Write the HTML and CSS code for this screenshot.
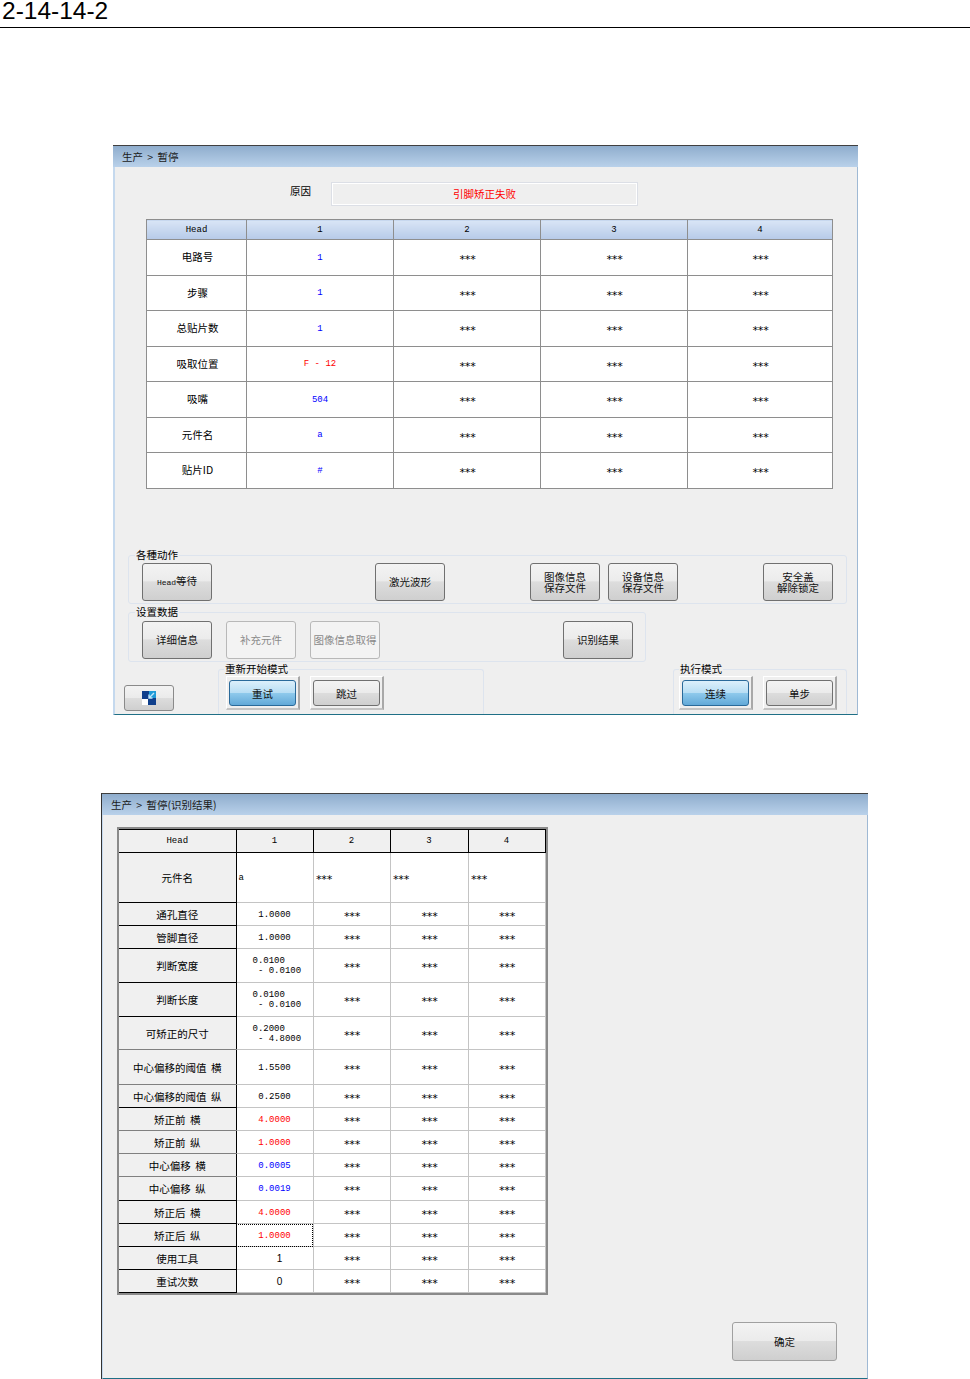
FILE: index.html
```html
<!DOCTYPE html>
<html lang="zh-CN">
<head>
<meta charset="utf-8">
<title>2-14-14-2</title>
<link rel="stylesheet" href="styles.css">
</head>
<body>
<header class="page-head">2-14-14-2</header>
<main class="page">
  <section class="window win-a">
    <div class="titlebar">生产 &gt; 暂停</div>
    <div class="win-body body-a">
      <div class="reason">
        <span class="reason-label">原因</span>
        <div class="reason-box">引脚矫正失败</div>
      </div>
      <table class="grid grid-a">
        <colgroup><col class="a0"><col class="a1"><col class="a1"><col class="a1"><col class="a4"></colgroup>
        <tr class="ah"><th>Head</th><th>1</th><th>2</th><th>3</th><th>4</th></tr>
        <tr class="r36"><td class="cn">电路号</td><td class="blue">1</td><td>***</td><td>***</td><td>***</td></tr>
        <tr class="r35"><td class="cn">步骤</td><td class="blue">1</td><td>***</td><td>***</td><td>***</td></tr>
        <tr class="r36"><td class="cn">总贴片数</td><td class="blue">1</td><td>***</td><td>***</td><td>***</td></tr>
        <tr class="r35"><td class="cn">吸取位置</td><td class="red">F - 12</td><td>***</td><td>***</td><td>***</td></tr>
        <tr class="r36"><td class="cn">吸嘴</td><td class="blue">504</td><td>***</td><td>***</td><td>***</td></tr>
        <tr class="r35"><td class="cn">元件名</td><td class="blue">a</td><td>***</td><td>***</td><td>***</td></tr>
        <tr class="r36"><td class="cn">贴片ID</td><td class="blue">#</td><td>***</td><td>***</td><td>***</td></tr>
      </table>

      <fieldset class="group group-1">
        <legend>各種动作</legend>
        <div class="btn-row">
          <button class="btn"><span class="mono">Head</span>等待</button>
          <button class="btn gap-163">激光波形</button>
          <button class="btn gap-85 tight">图像信息<br>保存文件</button>
          <button class="btn gap-8 tight">设备信息<br>保存文件</button>
          <button class="btn gap-85 tight">安全盖<br>解除锁定</button>
        </div>
      </fieldset>

      <fieldset class="group group-2">
        <legend>设置数据</legend>
        <div class="btn-row">
          <button class="btn">详细信息</button>
          <button class="btn gap-14 off">补充元件</button>
          <button class="btn gap-14 off">图像信息取得</button>
          <button class="btn gap-183">识别结果</button>
        </div>
      </fieldset>

      <div class="bottom">
        <button class="btn icon-btn" aria-label="切换">
          <svg width="14" height="14" viewBox="0 0 14 14">
            <rect x="0" y="0" width="14" height="14" fill="#0f3f8c"/>
            <rect x="7" y="0" width="7" height="7" fill="#1e9bd8"/>
            <rect x="0" y="8" width="6" height="6" fill="#fff"/>
            <path d="M12 2 L7 7 M7 3.5 V7 H10.5" stroke="#bfe6fa" stroke-width="1.4" fill="none"/>
          </svg>
        </button>
        <fieldset class="group mode mode-restart">
          <legend>重新开始模式</legend>
          <div class="toggles">
            <span class="frame"><button class="tbtn on">重试</button></span>
            <span class="frame"><button class="tbtn">跳过</button></span>
          </div>
        </fieldset>
        <fieldset class="group mode mode-run">
          <legend>执行模式</legend>
          <div class="toggles">
            <span class="frame"><button class="tbtn on">连续</button></span>
            <span class="frame"><button class="tbtn">单步</button></span>
          </div>
        </fieldset>
      </div>
    </div>
  </section>

  <section class="window win-b">
    <div class="titlebar">生产 &gt; 暂停(识别结果)</div>
    <div class="win-body body-b">
      <table class="grid grid-b">
        <colgroup><col class="b0"><col class="b1"><col class="b1"><col class="b3"><col class="b4"></colgroup>
        <tr class="h23"><th class="dk">Head</th><th class="dk">1</th><th class="dk">2</th><th class="dk">3</th><th class="dk">4</th></tr>
        <tr class="h50"><th class="cn">元件名</th><td class="left">a</td><td class="left">***</td><td class="left">***</td><td class="left">***</td></tr>
        <tr class="h23"><th class="cn">通孔直径</th><td class="num">1.0000</td><td>***</td><td>***</td><td>***</td></tr>
        <tr class="h23"><th class="cn">管脚直径</th><td class="num">1.0000</td><td>***</td><td>***</td><td>***</td></tr>
        <tr class="h34"><th class="cn">判断宽度</th><td class="num two">0.0100<br>&nbsp;- 0.0100</td><td>***</td><td>***</td><td>***</td></tr>
        <tr class="h34"><th class="cn">判断长度</th><td class="num two">0.0100<br>&nbsp;- 0.0100</td><td>***</td><td>***</td><td>***</td></tr>
        <tr class="h33"><th class="cn gy">可矫正的尺寸</th><td class="num two">0.2000<br>&nbsp;- 4.8000</td><td>***</td><td>***</td><td>***</td></tr>
        <tr class="h35"><th class="cn gy">中心偏移的阈值 横</th><td class="num">1.5500</td><td>***</td><td>***</td><td>***</td></tr>
        <tr class="h23"><th class="cn">中心偏移的阈值 纵</th><td class="num">0.2500</td><td>***</td><td>***</td><td>***</td></tr>
        <tr class="h23"><th class="cn gy">矫正前 横</th><td class="num red">4.0000</td><td>***</td><td>***</td><td>***</td></tr>
        <tr class="h23"><th class="cn gy">矫正前 纵</th><td class="num red">1.0000</td><td>***</td><td>***</td><td>***</td></tr>
        <tr class="h23"><th class="cn gy">中心偏移 横</th><td class="num blue">0.0005</td><td>***</td><td>***</td><td>***</td></tr>
        <tr class="h24"><th class="cn">中心偏移 纵</th><td class="num blue">0.0019</td><td>***</td><td>***</td><td>***</td></tr>
        <tr class="h23"><th class="cn">矫正后 横</th><td class="num red">4.0000</td><td>***</td><td>***</td><td>***</td></tr>
        <tr class="h23"><th class="cn">矫正后 纵</th><td class="num red focus">1.0000</td><td>***</td><td>***</td><td>***</td></tr>
        <tr class="h23"><th class="cn">使用工具</th><td class="int">1</td><td>***</td><td>***</td><td>***</td></tr>
        <tr class="h23"><th class="cn">重试次数</th><td class="int">0</td><td>***</td><td>***</td><td>***</td></tr>
      </table>
      <div class="ok-row"><button class="btn ok">确定</button></div>
    </div>
  </section>
</main>
</body>
</html>
```
FILE: styles.css
```css
* { box-sizing: border-box; }
html, body { margin: 0; padding: 0; background: #fff; }
body {
  width: 970px;
  height: 1379px;
  overflow: hidden;
  font-family: "Noto Sans CJK SC", "Liberation Sans", sans-serif;
  font-size: 10.5px;
  color: #000;
}
.page-head {
  height: 28px;
  padding: 0 0 0 2px;
  border-bottom: 1px solid #000;
  font-family: "Liberation Sans", sans-serif;
  font-size: 24.5px;
  line-height: 22px;
}
.page { display: flex; flex-direction: column; align-items: flex-start; }

.window { display: flex; flex-direction: column; background: #efefef; }
.win-a { width: 745px; height: 570px; margin: 117px 0 0 113px; }
.win-b { width: 767px; height: 586px; margin: 78px 0 0 101px; }
.titlebar {
  flex: none;
  height: 22px;
  padding-left: 9px;
  border-top: 1px solid #404040;
  background: linear-gradient(#8fadcd, #b9d1ea);
  font-size: 10.5px;
  line-height: 21px;
  word-spacing: 2px;
  color: #1a1a1a;
}
.win-body {
  flex: 1;
  min-height: 0;
  display: flex;
  flex-direction: column;
  overflow: hidden;
  border-left: 2px solid #c5d9ee;
  border-right: 1px solid #9fb9d4;
  border-bottom: 1px solid #1f6f86;
}
.win-b .win-body { border-left: 1px solid #c5d9ee; }
.win-b { border-left: 1px solid #333; }

.body-a { padding-top: 15px; }
.reason { display: flex; align-items: center; height: 24px; }
.reason-label { margin-left: 175px; width: 41px; line-height: 18px; margin-top: -7px; }
.reason-box {
  width: 307px;
  height: 24px;
  border: 1px solid #dcdfe6;
  box-shadow: inset 0 0 0 1px #fff;
  color: #f00;
  text-align: center;
  line-height: 21px;
}

.grid { border-collapse: collapse; table-layout: fixed; font-family: "Liberation Mono", "Noto Sans CJK SC", monospace; font-size: 9px; background: #fff; }
.grid th, .grid td { padding: 0; text-align: center; font-weight: 400; }
.grid td:nth-child(n+3) { font-family: "DejaVu Sans Mono", monospace; font-size: 11px; letter-spacing: -1.3px; padding-top: 4px; }
.grid th.cn, .grid td.cn { font-family: "Noto Sans CJK SC", sans-serif; font-size: 10.5px; word-spacing: 2px; }
.blue { color: #00f; }
.red { color: #f00; }

.grid-a { width: 686px; margin: 13px 0 0 31px; }
.a0 { width: 100px; }
.a1 { width: 147px; }
.a4 { width: 145px; }
.grid-a th, .grid-a td { border: 1px solid #8e8e8e; }
.grid-a td.cn { padding-left: 2px; padding-bottom: 2px; }
.grid-a th { background: linear-gradient(#d9e5f6, #b6cae8); }
.ah { height: 20px; }
.r35 { height: 35px; }
.r36 { height: 36px; }

.group {
  margin: 0;
  padding: 0;
  min-width: 0;
  border: 1px solid #dde4ee;
  border-radius: 3px;
}
.group legend { margin-left: 6px; padding: 0 1px; font-size: 10.5px; line-height: 14px; }
.group-1 { width: 719px; height: 56px; margin: 59px 0 0 13px; }
.group-2 { width: 518px; height: 57px; margin: 1px 0 0 13px; }
.btn-row { display: flex; margin: 1px 0 0 13px; }
.group-2 .btn-row { margin-top: 2px; }
.btn {
  flex: none;
  width: 70px;
  height: 38px;
  padding: 0;
  border: 1px solid #707070;
  border-radius: 3px;
  background: linear-gradient(#f3f3f3 0, #ebebeb 48%, #dddddd 49%, #cfcfcf 100%);
  font-family: "Noto Sans CJK SC", sans-serif;
  font-size: 10.5px;
  line-height: 12px;
  color: #111;
}
.tight { line-height: 11px; }
.mono { font-family: "Liberation Mono", monospace; font-size: 8px; }
.off { border-color: #b8b8b8; background: #f3f3f3; color: #8a8a8a; }
.gap-8 { margin-left: 8px; }
.gap-14 { margin-left: 14px; }
.gap-85 { margin-left: 85px; }
.gap-163 { margin-left: 163px; }
.gap-183 { margin-left: 183px; }

.bottom { display: flex; flex: 1; min-height: 0; align-items: flex-end; }
.icon-btn {
  width: 50px;
  height: 26px;
  margin: 0 0 3px 9px;
  display: flex;
  align-items: center;
  justify-content: center;
  border-color: #8a8a8a;
}
.mode { height: 54px; border-bottom: 0; border-radius: 3px 3px 0 0; align-self: flex-start; }
.mode legend { margin-left: 5px; }
.mode-restart { width: 266px; margin-left: 44px; }
.mode-run { width: 174px; margin-left: 189px; }
.toggles { display: flex; gap: 10px; margin: 0 0 0 7px; }
.mode-run .toggles { gap: 10px; margin-left: 5px; }
.frame {
  display: block;
  padding: 3px 2px 2px 2px;
  border-right: 2px solid #a8a8a8;
  border-bottom: 2px solid #c4c4c4;
  border-top: 1px solid #fff;
  border-left: 1px solid #fff;
}
.tbtn {
  display: block;
  width: 67px;
  height: 26px;
  padding: 0;
  border: 1px solid #707070;
  border-radius: 3px;
  background: linear-gradient(#f3f3f3 0, #ebebeb 48%, #dddddd 49%, #cfcfcf 100%);
  font-family: "Noto Sans CJK SC", sans-serif;
  font-size: 10.5px;
  color: #111;
}
.tbtn.on { border-color: #2a6a9a; background: linear-gradient(#dcf0fb, #b8def4 48%, #8fcaec 50%, #62a9d8); }

.body-b { padding-top: 14px; }
.grid-b { width: 426px; margin-left: 16px; outline: 2px solid #8a8a8a; outline-offset: 0; }
.b0 { width: 117px; }
.b1 { width: 77px; }
.b3 { width: 78px; }
.b4 { width: 77px; }
.grid-b td { border: 1px solid #c4c4c4; }
.grid-b th { background: #f0f0f0; border: 1px solid #000; border-left: 0; border-top-color: #000; }
.grid-b th.gy { border-bottom-color: #808080; }
.grid-b th.dk { border-right-color: #000; }
.h23 { height: 23px; }
.h24 { height: 24px; }
.h33 { height: 33px; }
.h34 { height: 34px; }
.h35 { height: 35px; }
.h50 { height: 50px; }
.grid-b .left { text-align: left; padding-left: 2px; }
.grid-b td.num { padding-top: 1px; }
.two { line-height: 10px; }
.grid-b .two { text-align: left; padding-left: 16px; }
.int { font-size: 10px; padding-left: 10px !important; font-family: "Liberation Sans", sans-serif; }
.grid-b td.focus { outline: 1px dotted #000; outline-offset: -1px; }
.ok-row { display: flex; justify-content: flex-end; margin-top: 29px; padding-right: 30px; }
.ok { width: 105px; height: 39px; border-color: #a0a0a0; }
```
